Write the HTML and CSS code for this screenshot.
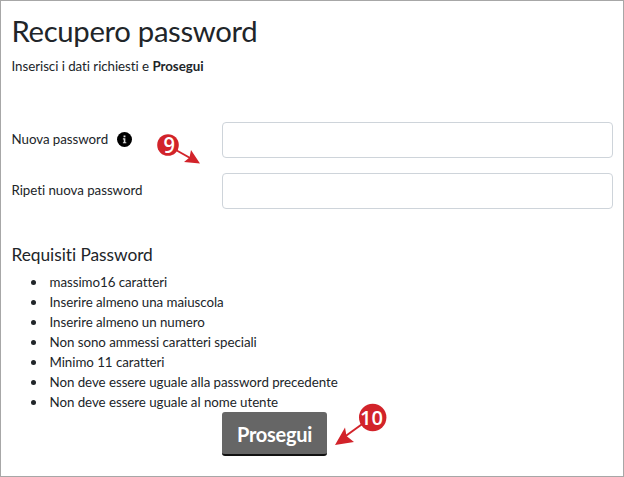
FILE: index.html
```html
<!DOCTYPE html>
<html lang="it">
  <head>
    <meta charset="UTF-8" />
    <meta name="viewport" content="width=device-width, initial-scale=1.0" />
    <title>Recupero password</title>
    <link rel="stylesheet" href="styles.css">
  </head>
  <body>
    <div class="page">
      <h1>Recupero password</h1>
      <p class="intro">Inserisci i dati richiesti e <strong>Prosegui</strong></p>

      <form>
        <div class="form-row">
          <label for="password">Nuova password
            <svg class="info" viewBox="0 0 16 16">
              <circle cx="8" cy="8" r="8" fill="#000" />
              <path d="M6.3 6.7h2.6v4.2h1v1.2H6.3v-1.2h.9V7.9h-.9zM7 3.6h2v2H7z" fill="#ddd" />
            </svg>
          </label>
          <input type="password" id="password" />
        </div>
        <div class="form-row">
          <label for="repeat">Ripeti nuova password</label>
          <input type="password" id="repeat" />
        </div>

        <h2>Requisiti Password</h2>
        <ul>
          <li>massimo16 caratteri</li>
          <li>Inserire almeno una maiuscola</li>
          <li>Inserire almeno un numero</li>
          <li>Non sono ammessi caratteri speciali</li>
          <li>Minimo 11 caratteri</li>
          <li>Non deve essere uguale alla password precedente</li>
          <li>Non deve essere uguale al nome utente</li>
        </ul>
        <button type="submit">Prosegui</button>
      </form>

      <!-- step markers -->
      <svg class="step step-9" viewBox="0 0 50 36">
        <path d="M20 17.5L36 26.5" stroke="#d2232a" stroke-width="2" />
        <path d="M45 31.5L36 18L34.5 25.5L29 30Z" fill="#d2232a" />
        <circle cx="13" cy="13" r="10.8" fill="#d2232a" />
        <text x="14.2" y="20.8" font-size="21" textLength="11.5" lengthAdjust="spacingAndGlyphs">9</text>
      </svg>
      <svg class="step step-10" viewBox="0 0 60 50">
        <path d="M35 20L15 34.5" stroke="#d2232a" stroke-width="2" />
        <path d="M5 43L15 25.5L16.5 34L24 40Z" fill="#d2232a" />
        <circle cx="42.7" cy="15.5" r="13.7" fill="#d2232a" />
        <text x="41.6" y="23.2" font-size="20.5" textLength="23" lengthAdjust="spacingAndGlyphs">10</text>
      </svg>
    </div>
  </body>
</html>
```
FILE: styles.css
```css
* {
  box-sizing: border-box;
}

body {
  margin: 0;
  font-family: "Lato", sans-serif;
  font-size: 13.33px;
  font-variant-ligatures: none;
  letter-spacing: -0.05px;
  line-height: 20px;
  color: #212529;
  background-color: #fff;
}

.page {
  position: relative;
  height: 477px;
  padding: 13px 10px 0 10.5px;
  border: 1px solid #a7a7a7;
  overflow: hidden;
}

h1 {
  margin: 0 0 8px;
  font-size: 29.3px;
  font-weight: 400;
  letter-spacing: -0.33px;
  line-height: 34px;
}

.intro {
  margin: 0 0 46px;
}

.form-row {
  display: flex;
  align-items: center;
  margin-bottom: 15px;
}

.form-row label {
  display: flex;
  align-items: center;
  gap: 9px;
  width: 210.5px;
  padding-bottom: 2px;
}

.form-row input {
  flex: 1;
  height: 36px;
  border: 1px solid #ced4da;
  border-radius: 4px;
}

.info {
  width: 15px;
  height: 15px;
}

h2 {
  margin: 36px 0 7px;
  font-size: 17.33px;
  font-weight: 400;
  line-height: 20px;
}

ul {
  margin: 0;
  padding-left: 19px;
  list-style: none;
}

li {
  display: flex;
  align-items: center;
}

li::before {
  content: "";
  width: 5px;
  height: 5px;
  margin-right: 14px;
  border-radius: 50%;
  background-color: #212529;
}

button {
  display: block;
  width: 105px;
  height: 44px;
  margin: 0 0 0 210.5px;
  padding: 2px 0 0;
  font-family: inherit;
  font-size: 20px;
  font-weight: 700;
  letter-spacing: -0.3px;
  color: #fff;
  background-color: #666;
  border: 0;
  border-bottom: 2px solid #111;
  border-radius: 3px;
}

.step {
  position: absolute;
}

.step text {
  font-family: "Open Sans", sans-serif;
  font-weight: 600;
  letter-spacing: 0;
  fill: #fff;
  text-anchor: middle;
}

.step-9 {
  left: 154px;
  top: 131px;
  width: 50px;
  height: 36px;
}

.step-10 {
  left: 329px;
  top: 401px;
  width: 60px;
  height: 50px;
}
```
